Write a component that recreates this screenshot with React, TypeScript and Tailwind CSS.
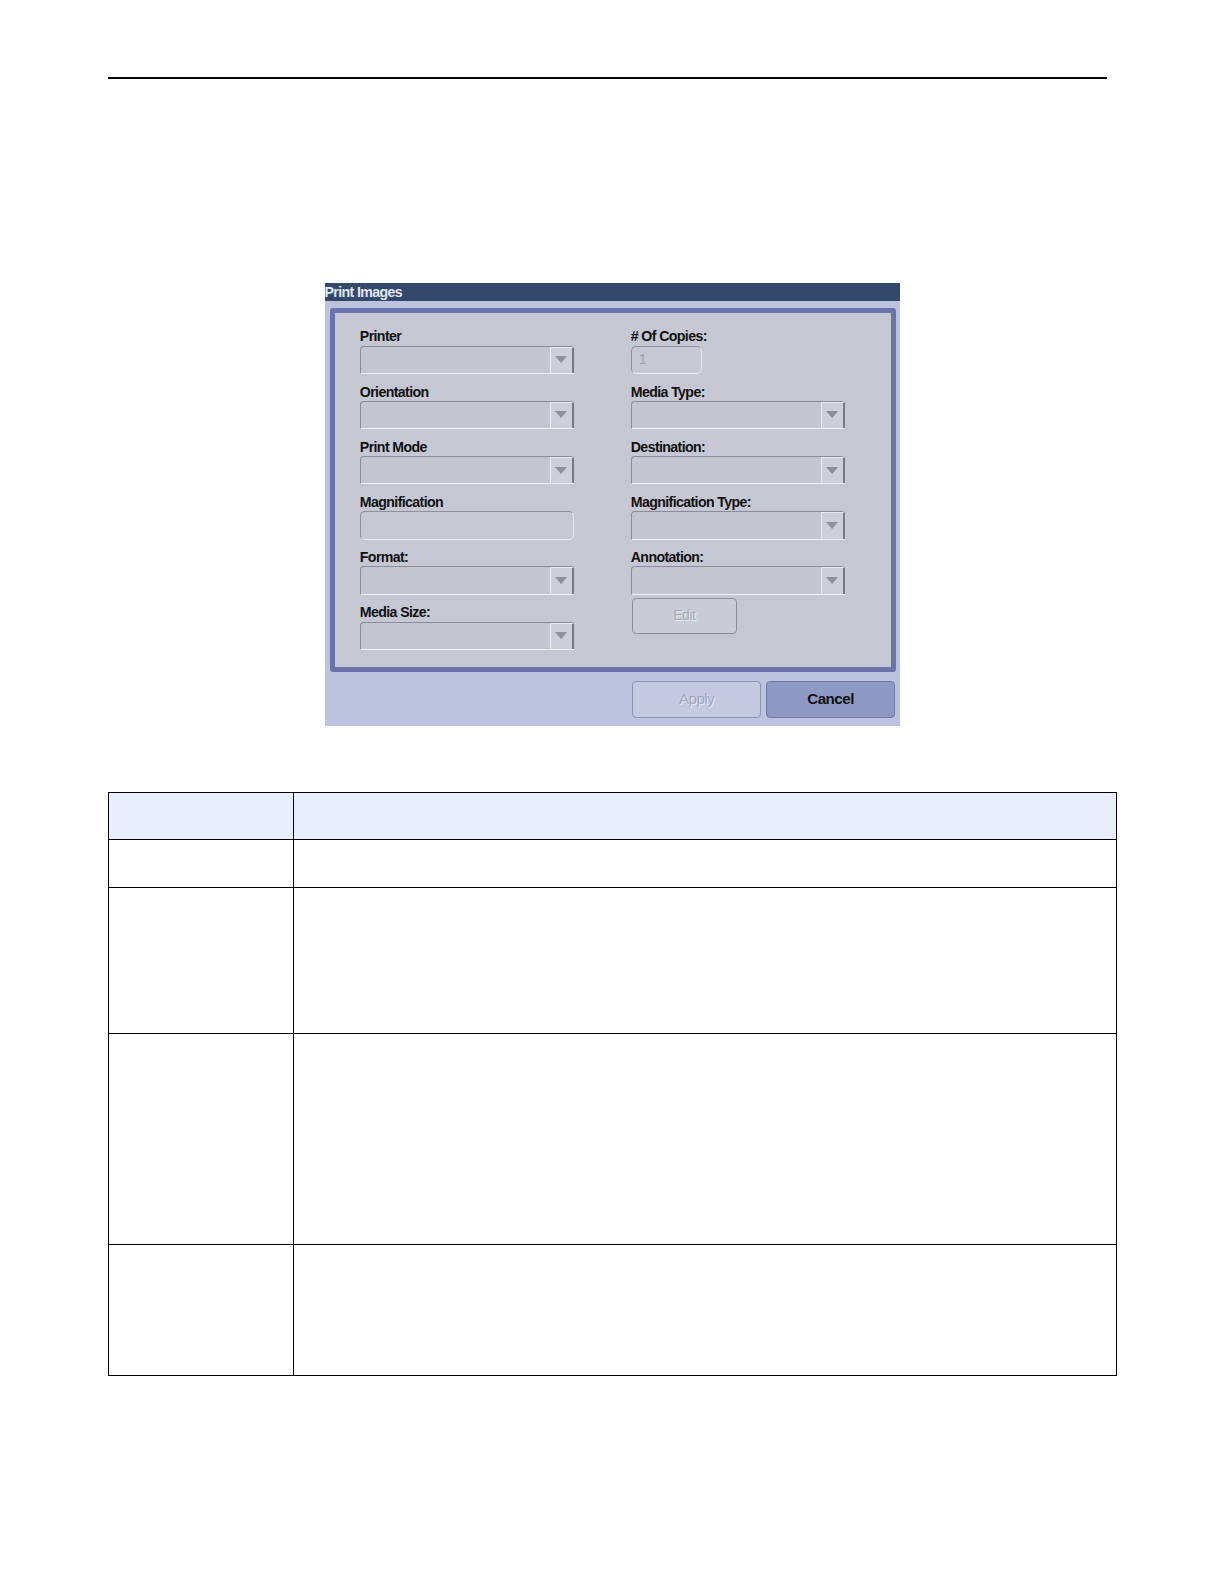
import React from "react";

const sans = {
  fontFamily: '"Liberation Sans", Arial, sans-serif',
};

type Field = { label: string; kind: "select" | "text" | "copies" };

const leftFields: Field[] = [
  { label: "Printer", kind: "select" },
  { label: "Orientation", kind: "select" },
  { label: "Print Mode", kind: "select" },
  { label: "Magnification", kind: "text" },
  { label: "Format:", kind: "select" },
  { label: "Media Size:", kind: "select" },
];

const rightFields: Field[] = [
  { label: "# Of Copies:", kind: "copies" },
  { label: "Media Type:", kind: "select" },
  { label: "Destination:", kind: "select" },
  { label: "Magnification Type:", kind: "select" },
  { label: "Annotation:", kind: "select" },
];

const tableRows = [46, 47, 145, 209, 129];

export default function App() {
  return (
    <div className="w-full bg-white pb-[100px] [zoom:1.011]">
      <div className="pl-[107px] pt-[76px]">
        <div className="h-[2px] w-[988px] bg-black" />
      </div>

      <div className="ml-[321px] mt-[202px] w-[569px]" style={sans}>
        <div className="h-[18px] bg-[#33496b] text-[14px] font-bold leading-[18px] tracking-[-0.6px] text-[#e2e6f2]">
          Print Images
        </div>
        <div className="h-[420px] bg-[#bdc3de] pl-[5px] pr-[4px] pt-[7px]">
          <div className="h-[360px] rounded-[3px] border-[5px] border-[#6a74ab] bg-[#c5c8d2]">
            <div className="flex pl-[25px] pt-[15px]">
              <div className="flex w-[268px] flex-col">
                {leftFields.map((f) => (
                  <FieldBlock key={f.label} field={f} />
                ))}
              </div>
              <div className="flex flex-col">
                {rightFields.map((f) => (
                  <FieldBlock key={f.label} field={f} />
                ))}
                <button
                  type="button"
                  className="ml-[1px] mt-[-6px] h-[35px] w-[104px] rounded-[4px] border border-[#8b8e99] bg-[#c9ccd6] text-[14px] tracking-[-0.5px] text-[#a3a6b1] [text-shadow:1px_1px_0_#eef0f5]"
                >
                  Edit
                </button>
              </div>
            </div>
          </div>
          <div className="mt-[9px] flex justify-end gap-[5px] pr-[1px]">
            <button
              type="button"
              className="h-[36px] w-[128px] rounded-[4px] border border-[#8c92b2] bg-[#c4c9e1] text-[15px] tracking-[-0.5px] text-[#a1a6bd] [text-shadow:1px_1px_0_#e6e9f5]"
            >
              Apply
            </button>
            <button
              type="button"
              className="h-[36px] w-[127px] rounded-[4px] border border-[#6e77a3] bg-[#8e98c5] text-[15px] font-bold tracking-[-0.5px] text-[#111]"
            >
              Cancel
            </button>
          </div>
        </div>
      </div>

      <div className="ml-[107px] mt-[65px] w-[998px] border border-black">
        {tableRows.map((h, i) => (
          <div
            key={i}
            className={`flex ${i > 0 ? "border-t border-black" : ""} ${i === 0 ? "bg-[#e8eefd]" : ""}`}
            style={{ height: h }}
          >
            <div className="w-[183px] border-r border-black" />
            <div className="flex-1" />
          </div>
        ))}
      </div>
    </div>
  );
}

function FieldBlock({ field }: { field: Field }) {
  return (
    <div className="h-[54.6px]">
      <div className="h-[17px] text-[14px] font-bold leading-[17px] tracking-[-0.6px] text-[#111]">
        {field.label}
      </div>
      {field.kind === "select" && <SelectBox />}
      {field.kind === "text" && (
        <div className="h-[28px] w-[212px] rounded-[5px] border border-[#8d9099] border-b-[#eceef3] border-r-[#e4e6ec] bg-[#c5c8d2]" />
      )}
      {field.kind === "copies" && (
        <div className="flex h-[28px] w-[70px] items-center rounded-[5px] border border-[#8d9099] border-b-[#eceef3] border-r-[#e4e6ec] bg-[#c5c8d2] pl-[7px] text-[14px] text-[#9ea1ab]">
          1
        </div>
      )}
    </div>
  );
}

function SelectBox() {
  return (
    <div className="flex h-[28px] w-[212px] rounded-t-[4px] border border-[#8a8d96] border-b-[#eef0f4] border-r-0 bg-[#c3c6d0]">
      <div className="flex-1" />
      <div className="flex w-[24px] items-center justify-center border-l border-t border-[#e8eaef] border-b-[#777a84] border-r-2 border-r-[#777a84] bg-[#ccced8]">
        <svg width="12" height="8" viewBox="0 0 12 8">
          <path d="M0 0 L12 0 L6 7 Z" fill="#8e919b" />
        </svg>
      </div>
    </div>
  );
}
